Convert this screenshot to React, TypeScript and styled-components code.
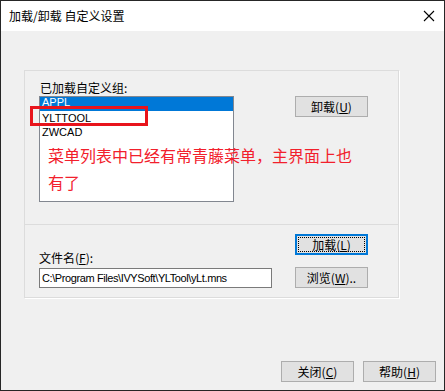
import React from "react";
import styled, { createGlobalStyle } from "styled-components";

const Global = createGlobalStyle`
  html, body { margin: 0; padding: 0; background: #ffffff; }
  * { box-sizing: border-box; }
`;

const CJK = `"Noto Sans CJK SC", "Microsoft YaHei", sans-serif`;

const Window = styled.div`
  width: 445px;
  height: 391px;
  border: 1px solid #262626;
  display: flex;
  flex-direction: column;
  position: relative;
  font-family: ${CJK};
  font-size: 12px;
  color: #000;
  overflow: hidden;
`;

const TitleBar = styled.div`
  height: 30px;
  background: #ffffff;
  display: flex;
  align-items: center;
  justify-content: space-between;
  padding: 0 9px 0 8px;
`;

const Title = styled.span`
  font-size: 12px;
  line-height: 1;
`;

const CloseIcon = styled.svg`
  width: 12px;
  height: 12px;
`;

const Body = styled.div`
  flex: 1;
  background: #f0f0f0;
  display: flex;
  flex-direction: column;
  padding: 39px 8px 8px 23px;
  position: relative;
`;

const GroupBox = styled.div`
  width: 375px;
  height: 228px;
  border: 1px solid #dcdcdc;
  box-shadow: 1px 1px 0 #ffffff;
  display: flex;
  flex-direction: column;
`;

const TopSection = styled.div`
  height: 154px;
  border-bottom: 1px solid #dcdcdc;
  display: flex;
  padding: 9px 0 0 14px;
`;

const ListColumn = styled.div`
  display: flex;
  flex-direction: column;
`;

const Label = styled.label`
  font-size: 12px;
  line-height: 16px;
  height: 16px;
  padding-left: 1px;
`;

const ListBox = styled.div`
  position: relative;
  width: 195px;
  height: 106px;
  border: 1px solid #828790;
  background: #ffffff;
`;

const ListItems = styled.div`
  overflow: hidden;
  height: 100%;
`;

const ListItem = styled.div<{ $selected?: boolean; $clipped?: boolean }>`
  height: 14px;
  overflow: hidden;
  padding-left: 2px;
  font-family: "Liberation Sans", Arial, sans-serif;
  font-size: 11px;
  line-height: ${(p) => (p.$clipped ? "11px" : "14px")};
  background: ${(p) => (p.$selected ? "#0078d7" : "transparent")};
  color: ${(p) => (p.$selected ? "#ffffff" : "#000000")};
`;

const RedBox = styled.div`
  position: absolute;
  left: -10px;
  top: 9px;
  width: 118px;
  height: 20px;
  border: 3px solid #e8141c;
`;

const Note = styled.div`
  position: absolute;
  left: 47px;
  top: 111px;
  width: 312px;
  font-family: ${CJK};
  font-size: 16px;
  line-height: 27px;
  color: #f2202c;
`;

const SideButtons = styled.div`
  display: flex;
  flex-direction: column;
  gap: 12px;
  margin-left: 61px;
  padding-top: 16px;
`;

const Button = styled.button<{ $default?: boolean }>`
  width: 73px;
  height: 21px;
  background: #e1e1e1;
  border: ${(p) => (p.$default ? "2px solid #0078d7" : "1px solid #adadad")};
  font-family: ${CJK};
  font-size: 12px;
  color: #000;
  padding: 0;
  display: flex;
  align-items: center;
  justify-content: center;
  outline: ${(p) => (p.$default ? "1px dotted #000" : "none")};
  outline-offset: ${(p) => (p.$default ? "-4px" : "0")};
  line-height: 1;
`;

const U = styled.span`
  text-decoration: underline;
`;

const BottomSection = styled.div`
  flex: 1;
  display: flex;
  padding: 9px 0 9px 14px;
`;

const FileColumn = styled.div`
  display: flex;
  flex-direction: column;
  justify-content: flex-end;
`;

const FileLabel = styled.label`
  font-size: 12px;
  line-height: 14px;
  margin-bottom: 3px;
`;

const TextBox = styled.div`
  width: 233px;
  height: 20px;
  border: 1px solid #7a7a7a;
  background: #ffffff;
  font-family: "Liberation Sans", Arial, sans-serif;
  font-size: 11px;
  letter-spacing: -0.4px;
  line-height: 18px;
  padding-left: 2px;
  white-space: nowrap;
  overflow: hidden;
`;

const BottomButtons = styled.div`
  display: flex;
  flex-direction: column;
  gap: 12px;
  margin-left: 23px;
`;

const Footer = styled.div`
  margin-top: auto;
  display: flex;
  justify-content: flex-end;
  gap: 9px;
`;

export default function App() {
  return (
    <>
      <Global />
      <Window>
        <TitleBar>
          <Title>加载/卸载 自定义设置</Title>
          <CloseIcon viewBox="0 0 12 12">
            <path d="M1 1 L11 11 M11 1 L1 11" stroke="#000" strokeWidth="1.1" fill="none" />
          </CloseIcon>
        </TitleBar>
        <Body>
          <GroupBox>
            <TopSection>
              <ListColumn>
                <Label>已加载自定义组:</Label>
                <ListBox>
                  <ListItems>
                    <ListItem $selected $clipped>APPL</ListItem>
                    <ListItem>YLTTOOL</ListItem>
                    <ListItem>ZWCAD</ListItem>
                  </ListItems>
                  <RedBox />
                </ListBox>
              </ListColumn>
              <SideButtons>
                <Button>
                  卸载(<U>U</U>)
                </Button>
              </SideButtons>
            </TopSection>
            <BottomSection>
              <FileColumn>
                <FileLabel>
                  文件名(<U>F</U>):
                </FileLabel>
                <TextBox>C:\Program Files\IVYSoft\YLTool\yLt.mns</TextBox>
              </FileColumn>
              <BottomButtons>
                <Button $default>
                  加载(<U>L</U>)
                </Button>
                <Button>
                  浏览(<U>W</U>)..
                </Button>
              </BottomButtons>
            </BottomSection>
          </GroupBox>
          <Footer>
            <Button>
              关闭(<U>C</U>)
            </Button>
            <Button>
              帮助(<U>H</U>)
            </Button>
          </Footer>
          <Note>菜单列表中已经有常青藤菜单，主界面上也有了</Note>
        </Body>
      </Window>
    </>
  );
}
